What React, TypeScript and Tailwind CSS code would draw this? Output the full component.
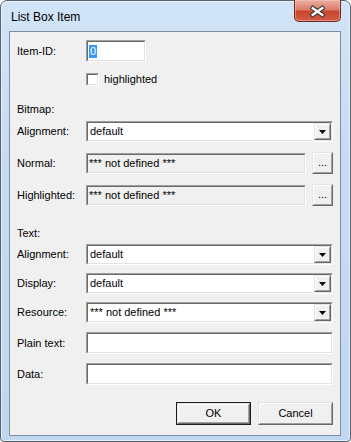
import React from "react";

const FONT = { fontFamily: '"Liberation Sans", Arial, sans-serif' };

function Sunken({ className = "", inner = "", children }: { className?: string; inner?: string; children?: React.ReactNode }) {
  return (
    <div className={`border border-t-[#a0a0a0] border-l-[#a0a0a0] border-b-white border-r-white ${className}`}>
      <div className={`h-full w-full border border-t-[#696969] border-l-[#696969] border-b-[#e3e3e3] border-r-[#e3e3e3] ${inner}`}>
        {children}
      </div>
    </div>
  );
}

function Raised({ className = "", inner = "", children }: { className?: string; inner?: string; children?: React.ReactNode }) {
  return (
    <div className={`border border-t-[#e3e3e3] border-l-[#e3e3e3] border-b-[#696969] border-r-[#696969] ${className}`}>
      <div className={`h-full w-full border border-t-white border-l-white border-b-[#a0a0a0] border-r-[#a0a0a0] bg-[#f0f0f0] ${inner}`}>
        {children}
      </div>
    </div>
  );
}

function Arrow() {
  return (
    <svg width="7" height="4" viewBox="0 0 7 4">
      <path d="M0 0 H7 L3.5 4 Z" fill="#000" />
    </svg>
  );
}

function Dropdown({ value }: { value: string }) {
  return (
    <Sunken className="h-[21px] flex-1" inner="flex items-stretch bg-white">
      <div className="flex flex-1 items-center pl-[2px] text-[11px] text-black">{value}</div>
      <Raised className="w-[17px]" inner="flex items-center justify-center">
        <Arrow />
      </Raised>
    </Sunken>
  );
}

function Label({ children }: { children: React.ReactNode }) {
  return <div className="w-[69px] shrink-0 text-[11px] leading-[13px] text-black">{children}</div>;
}

export default function App() {
  return (
    <div className="h-[442px] w-[351px] bg-white" style={FONT}>
      <div className="flex h-[442px] w-[351px] flex-col rounded-t-[7px] rounded-b-[4px] border border-[#56626e] bg-[linear-gradient(to_bottom,#d2e4f7_0%,#c5dbf2_40%,#bfd7f0_100%)] pb-[5px] pl-[8px] pr-[9px] shadow-[inset_0_0_0_1px_rgba(255,255,255,0.55)]">
        {/* Title bar */}
        <div className="flex h-[30px] items-start justify-between">
          <div className="mt-[9px] pl-[2px] text-[12px] leading-[15px] text-black">List Box Item</div>
          <div className="-mt-[1px] flex h-[22px] w-[47px] items-center justify-center rounded-b-[5px] border border-t-0 border-[#6e2c22] bg-[linear-gradient(to_bottom,#eab0a2_0%,#dc7d68_45%,#c8452f_55%,#d35d44_100%)] shadow-[inset_0_0_0_1px_rgba(255,200,190,0.45)]">
            <svg width="47" height="22" viewBox="0 0 47 22">
              <path d="M18.5 8 L28.5 15 M28.5 8 L18.5 15" stroke="#3b3b3b" strokeWidth="4.6" strokeLinecap="square" />
              <path d="M18.5 8 L28.5 15 M28.5 8 L18.5 15" stroke="#ffffff" strokeWidth="2.4" strokeLinecap="square" />
            </svg>
          </div>
        </div>

        {/* Client area */}
        <div className="flex flex-1 flex-col border border-[#7f8e9d] bg-[#f0f0f0] pl-[7px] pr-[7px] text-[11px] text-black">
          {/* Item-ID */}
          <div className="mt-[8px] flex h-[22px] items-center">
            <Label>Item-ID:</Label>
            <Sunken className="h-[22px] w-[60px]" inner="flex items-center bg-white pl-[1px]">
              <span className="bg-[#3399ff] px-[1px] leading-[13px] text-white">0</span>
            </Sunken>
          </div>

          {/* highlighted checkbox */}
          <div className="mt-[11px] flex h-[13px] items-center">
            <div className="w-[69px] shrink-0" />
            <Sunken className="h-[13px] w-[13px]" inner="bg-white" />
            <span className="ml-[5px] leading-[13px]">highlighted</span>
          </div>

          {/* Bitmap */}
          <div className="mt-[17px] flex h-[13px] items-center">
            <Label>Bitmap:</Label>
          </div>

          <div className="mt-[5px] flex h-[21px] items-center">
            <Label>Alignment:</Label>
            <Dropdown value="default" />
          </div>

          <div className="mt-[10px] flex h-[22px] items-center">
            <Label>Normal:</Label>
            <Sunken className="h-[21px] flex-1" inner="flex items-center bg-[#f0f0f0] pl-[1px]">
              <span>*** not defined ***</span>
            </Sunken>
            <Raised className="ml-[6px] h-[22px] w-[21px]" inner="flex items-center justify-center">
              <span className="-mt-[2px]">...</span>
            </Raised>
          </div>

          <div className="mt-[10px] flex h-[22px] items-center">
            <Label>Highlighted:</Label>
            <Sunken className="h-[21px] flex-1" inner="flex items-center bg-[#f0f0f0] pl-[1px]">
              <span>*** not defined ***</span>
            </Sunken>
            <Raised className="ml-[6px] h-[22px] w-[21px]" inner="flex items-center justify-center">
              <span className="-mt-[2px]">...</span>
            </Raised>
          </div>

          {/* Text */}
          <div className="mt-[21px] flex h-[13px] items-center">
            <Label>Text:</Label>
          </div>

          <div className="mt-[4px] flex h-[21px] items-center">
            <Label>Alignment:</Label>
            <Dropdown value="default" />
          </div>

          <div className="mt-[8px] flex h-[21px] items-center">
            <Label>Display:</Label>
            <Dropdown value="default" />
          </div>

          <div className="mt-[8px] flex h-[21px] items-center">
            <Label>Resource:</Label>
            <Dropdown value="*** not defined ***" />
          </div>

          <div className="mt-[9px] flex h-[22px] items-center">
            <Label>Plain text:</Label>
            <Sunken className="h-[22px] flex-1" inner="bg-white" />
          </div>

          <div className="mt-[9px] flex h-[22px] items-center">
            <Label>Data:</Label>
            <Sunken className="h-[22px] flex-1" inner="bg-white" />
          </div>

          {/* Buttons */}
          <div className="mt-[17px] flex h-[23px] justify-end gap-[7px]">
            <div className="h-[23px] w-[75px] border border-[#1e1e1e]">
              <Raised className="h-full w-full" inner="flex items-center justify-center">
                <span>OK</span>
              </Raised>
            </div>
            <Raised className="h-[23px] w-[75px]" inner="flex items-center justify-center">
              <span>Cancel</span>
            </Raised>
          </div>
        </div>
      </div>
    </div>
  );
}
